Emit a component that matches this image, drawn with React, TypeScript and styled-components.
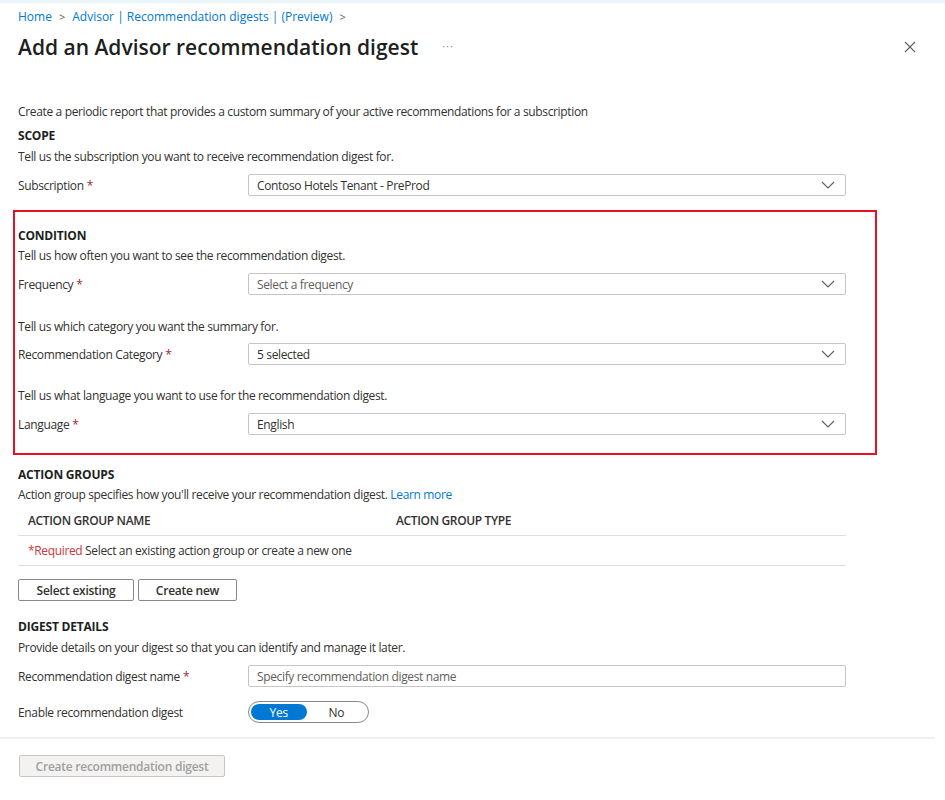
import React from "react";
import styled, { createGlobalStyle } from "styled-components";

const Global = createGlobalStyle`
  html, body { margin: 0; padding: 0; background: #ffffff; }
  body {
    font-family: "Open Sans", "Noto Sans", "Liberation Sans", sans-serif;
    color: #323130;
    font-size: 12px;
  }
  * { box-sizing: border-box; }
`;

const Page = styled.div`
  width: 945px;
  min-height: 800px;
  border-top: 3px solid #e9f7fc;
  padding: 4px 0 0 0;
`;

const Inner = styled.div`
  padding: 0 0 0 18px;
`;

const Breadcrumb = styled.nav`
  display: flex;
  align-items: center;
  gap: 7px;
  height: 20px;
  line-height: 20px;
  color: #0078d4;
  font-size: 12px;
`;

const Crumb = styled.span`
  color: #0078d4;
`;

const Sep = styled.span`
  color: #605e5c;
  font-size: 11px;
`;

const TitleRow = styled.div`
  display: flex;
  align-items: center;
  height: 30px;
  margin-top: 5px;
  padding-right: 28px;
`;

const Title = styled.h1`
  margin: 0;
  font-size: 21px;
  font-weight: 600;
  color: #201f1e;
  letter-spacing: 0;
`;

const More = styled.span`
  margin-left: 24px;
  color: #8a8886;
  font-size: 11px;
  letter-spacing: 1px;
  position: relative;
  top: -2px;
`;

const Close = styled.button`
  margin-left: auto;
  border: none;
  background: transparent;
  padding: 0;
  width: 14px;
  height: 14px;
  display: flex;
  align-items: center;
  justify-content: center;
  cursor: pointer;
`;

const Text = styled.p<{ $mt?: number }>`
  margin: ${(p) => p.$mt ?? 0}px 0 0 0;
  height: 20px;
  line-height: 20px;
  font-size: 12px;
  color: #323130;
  letter-spacing: -0.35px;
  white-space: nowrap;
`;

const SectionHead = styled.h2<{ $mt?: number }>`
  margin: ${(p) => p.$mt ?? 0}px 0 0 0;
  height: 20px;
  line-height: 20px;
  font-size: 12px;
  font-weight: 700;
  color: #201f1e;
  letter-spacing: -0.2px;
`;

const FieldRow = styled.div<{ $mt?: number }>`
  display: grid;
  grid-template-columns: 230px 598px;
  align-items: center;
  height: 22px;
  margin-top: ${(p) => p.$mt ?? 0}px;
`;

const Label = styled.label`
  font-size: 12px;
  color: #323130;
  letter-spacing: -0.35px;
  white-space: nowrap;
`;

const Star = styled.span`
  color: #a4262c;
  margin-left: 3px;
`;

const SelectBox = styled.div<{ $placeholder?: boolean }>`
  height: 22px;
  border: 1px solid #c8c6c4;
  border-radius: 2px;
  display: flex;
  align-items: center;
  padding: 0 10px 0 8px;
  font-size: 12px;
  letter-spacing: -0.35px;
  color: ${(p) => (p.$placeholder ? "#605e5c" : "#323130")};
`;

const SelectValue = styled.span`
  flex: 1;
`;

const TextInput = styled.input`
  height: 22px;
  width: 598px;
  border: 1px solid #c8c6c4;
  border-radius: 2px;
  padding: 0 8px;
  font-family: inherit;
  font-size: 12px;
  letter-spacing: -0.35px;
  color: #323130;
  outline: none;
  &::placeholder { color: #605e5c; }
`;

const Highlight = styled.section`
  margin: 14px 0 0 -5px;
  width: 864px;
  border: 2px solid #e81123;
  padding: 14px 0 18px 3px;
`;

const Table = styled.div`
  width: 828px;
`;

const TableRow = styled.div<{ $h: number }>`
  display: grid;
  grid-template-columns: 368px 1fr;
  align-items: center;
  height: ${(p) => p.$h}px;
  border-bottom: 1px solid #e1dfdd;
  padding-left: 10px;
  font-size: 12px;
  letter-spacing: -0.35px;
`;

const ColHead = styled.span`
  font-weight: 600;
  color: #323130;
  text-transform: uppercase;
`;

const Required = styled.span`
  color: #d13438;
`;

const Link = styled.a`
  color: #0078d4;
  text-decoration: none;
`;

const ButtonRow = styled.div`
  display: flex;
  gap: 4px;
  margin-top: 13px;
`;

const Button = styled.button<{ $w: number }>`
  width: ${(p) => p.$w}px;
  height: 22px;
  border: 1px solid #8a8886;
  border-radius: 2px;
  background: #ffffff;
  font-family: inherit;
  font-size: 12px;
  font-weight: 600;
  color: #323130;
  letter-spacing: -0.25px;
  padding: 0;
`;

const Toggle = styled.div`
  width: 121px;
  height: 22px;
  border: 1px solid #8a8886;
  border-radius: 11px;
  display: flex;
  align-items: center;
  padding: 2px;
`;

const ToggleOption = styled.span<{ $on?: boolean }>`
  width: ${(p) => (p.$on ? 56 : 60)}px;
  height: 16px;
  border-radius: 8px;
  display: flex;
  align-items: center;
  justify-content: center;
  font-size: 12px;
  letter-spacing: -0.3px;
  background: ${(p) => (p.$on ? "#0078d4" : "transparent")};
  color: ${(p) => (p.$on ? "#ffffff" : "#323130")};
`;

const Divider = styled.hr`
  margin: 14px 0 0 0;
  width: 935px;
  border: none;
  border-top: 2px solid #f0f0f0;
`;

const Submit = styled.button`
  margin: 16px 0 0 19px;
  width: 206px;
  height: 22px;
  border: 1px solid #c8c6c4;
  border-radius: 2px;
  background: #f3f2f1;
  color: #a19f9d;
  font-family: inherit;
  font-size: 12px;
  font-weight: 600;
  letter-spacing: -0.25px;
  padding: 0;
`;

const Chevron = () => (
  <svg width="14" height="8" viewBox="0 0 14 8" fill="none">
    <path d="M1 1l6 6 6-6" stroke="#605e5c" strokeWidth="1.1" />
  </svg>
);

const CloseIcon = () => (
  <svg width="12" height="12" viewBox="0 0 12 12" fill="none">
    <path d="M1 1l10 10M11 1L1 11" stroke="#605e5c" strokeWidth="1.1" />
  </svg>
);

type SelectProps = { value: string; placeholder?: boolean };
const Select = ({ value, placeholder }: SelectProps) => (
  <SelectBox $placeholder={placeholder}>
    <SelectValue>{value}</SelectValue>
    <Chevron />
  </SelectBox>
);

export default function App() {
  return (
    <>
      <Global />
      <Page>
        <Inner>
          <Breadcrumb>
            <Crumb>Home</Crumb>
            <Sep>&gt;</Sep>
            <Crumb>Advisor | Recommendation digests | (Preview)</Crumb>
            <Sep>&gt;</Sep>
          </Breadcrumb>
          <TitleRow>
            <Title>Add an Advisor recommendation digest</Title>
            <More>···</More>
            <Close aria-label="Close">
              <CloseIcon />
            </Close>
          </TitleRow>

          <Text $mt={40}>
            Create a periodic report that provides a custom summary of your active recommendations for a subscription
          </Text>

          <SectionHead $mt={4}>SCOPE</SectionHead>
          <Text $mt={1}>Tell us the subscription you want to receive recommendation digest for.</Text>
          <FieldRow $mt={7}>
            <Label>
              Subscription<Star>*</Star>
            </Label>
            <Select value="Contoso Hotels Tenant - PreProd" />
          </FieldRow>

          <Highlight>
            <SectionHead>CONDITION</SectionHead>
            <Text>Tell us how often you want to see the recommendation digest.</Text>
            <FieldRow $mt={7}>
              <Label>
                Frequency<Star>*</Star>
              </Label>
              <Select value="Select a frequency" placeholder />
            </FieldRow>
            <Text $mt={22}>Tell us which category you want the summary for.</Text>
            <FieldRow $mt={6}>
              <Label>
                Recommendation Category<Star>*</Star>
              </Label>
              <Select value="5 selected" />
            </FieldRow>
            <Text $mt={21}>Tell us what language you want to use for the recommendation digest.</Text>
            <FieldRow $mt={7}>
              <Label>
                Language<Star>*</Star>
              </Label>
              <Select value="English" />
            </FieldRow>
          </Highlight>

          <SectionHead $mt={10}>ACTION GROUPS</SectionHead>
          <Text>
            Action group specifies how you'll receive your recommendation digest. <Link href="#">Learn more</Link>
          </Text>
          <Table>
            <TableRow $h={31}>
              <ColHead>Action group name</ColHead>
              <ColHead>Action group type</ColHead>
            </TableRow>
            <TableRow $h={30}>
              <span>
                <Required>*Required</Required> Select an existing action group or create a new one
              </span>
            </TableRow>
          </Table>
          <ButtonRow>
            <Button $w={116}>Select existing</Button>
            <Button $w={99}>Create new</Button>
          </ButtonRow>

          <SectionHead $mt={16}>DIGEST DETAILS</SectionHead>
          <Text $mt={1}>Provide details on your digest so that you can identify and manage it later.</Text>
          <FieldRow $mt={7}>
            <Label>
              Recommendation digest name<Star>*</Star>
            </Label>
            <TextInput placeholder="Specify recommendation digest name" />
          </FieldRow>
          <FieldRow $mt={14}>
            <Label>Enable recommendation digest</Label>
            <Toggle>
              <ToggleOption $on>Yes</ToggleOption>
              <ToggleOption>No</ToggleOption>
            </Toggle>
          </FieldRow>
        </Inner>
        <Divider />
        <Submit disabled>Create recommendation digest</Submit>
      </Page>
    </>
  );
}
